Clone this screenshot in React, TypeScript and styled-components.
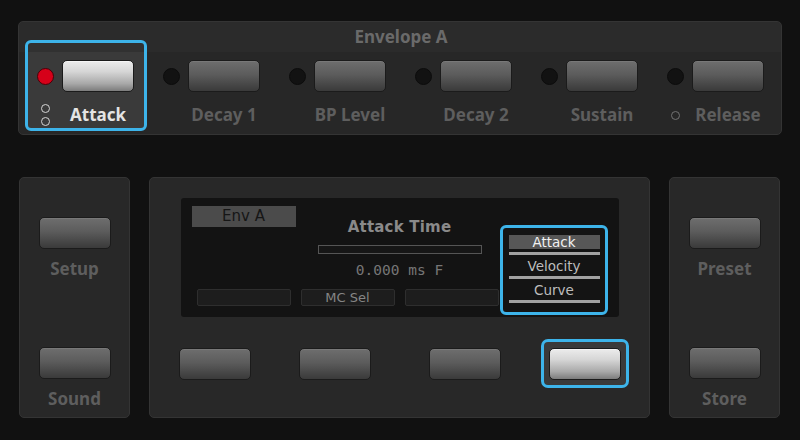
import React from "react";
import styled, { createGlobalStyle } from "styled-components";

const Global = createGlobalStyle`
  html, body { margin: 0; padding: 0; background: #111111; }
  body { font-family: "Noto Sans", "DejaVu Sans", sans-serif; }
  * { box-sizing: border-box; }
`;

const BLUE = "#3db4ea";

const Page = styled.div`
  width: 800px;
  height: 440px;
  padding: 21px 18px 0;
  display: flex;
  flex-direction: column;
  gap: 42px;
  background: #111111;
  overflow: hidden;
`;

/* ---------- Top envelope panel ---------- */
const EnvPanel = styled.section`
  height: 114px;
  border: 1px solid #343434;
  border-radius: 5px;
  background: linear-gradient(#2b2b2b 0 30px, #272727 30px);
  padding: 0 4px 3px 6px;
  display: flex;
  flex-direction: column;
`;

const EnvTitle = styled.div`
  height: 30px;
  line-height: 30px;
  text-align: center;
  font-size: 17px;
  font-weight: 700;
  color: #6a6a6a;
`;

const CellRow = styled.div`
  margin-top: -12px;
  display: flex;
  gap: 4px;
`;

const Cell = styled.div<{ $active?: boolean }>`
  width: 122px;
  height: 91px;
  border: 3px solid ${(p) => (p.$active ? BLUE : "transparent")};
  border-radius: 6px;
  background: ${(p) =>
    p.$active ? "linear-gradient(#313131 0 9px, #3a3a3a 9px)" : "transparent"};
  padding: 17px 10px 2px 9px;
  display: grid;
  grid-template-columns: 17px 72px;
  grid-template-rows: 32px 22px;
  column-gap: 8px;
  row-gap: 12px;
  align-items: center;
`;

const Led = styled.span<{ $on?: boolean }>`
  width: 17px;
  height: 17px;
  border-radius: 50%;
  background: ${(p) => (p.$on ? "#d60019" : "#121212")};
  border: 1px solid ${(p) => (p.$on ? "#4a0008" : "#0c0c0c")};
`;

const Marks = styled.div`
  display: flex;
  flex-direction: column;
  align-items: center;
  gap: 4px;
`;

const Ring = styled.span<{ $bright?: boolean }>`
  width: 9px;
  height: 9px;
  border-radius: 50%;
  border: 1.8px solid ${(p) => (p.$bright ? "#d4d4d4" : "#727272")};
`;

const Label = styled.div<{ $active?: boolean }>`
  line-height: 22px;
  text-align: center;
  font-size: 17px;
  font-weight: 700;
  color: ${(p) => (p.$active ? "#e4e4e4" : "#5e5e5e")};
  white-space: nowrap;
`;

const Key = styled.div<{ $lit?: boolean }>`
  width: 72px;
  height: 32px;
  border-radius: 5px;
  border: 1.5px solid #1b1b1b;
  background: ${(p) =>
    p.$lit
      ? "linear-gradient(#ececec 0%, #d6d6d6 35%, #a9a9a9 75%, #7c7c7c 100%)"
      : "linear-gradient(#6e6e6e 0%, #5c5c5c 45%, #464646 80%, #3a3a3a 100%)"};
  box-shadow: inset 0 1px 0 rgba(255, 255, 255, ${(p) => (p.$lit ? 0.5 : 0.08)});
`;

/* ---------- Bottom panels ---------- */
const LowerRow = styled.div`
  display: flex;
  gap: 19px;
  padding: 0 2px 0 1px;
  height: 241px;
`;

const SidePanel = styled.section`
  width: 111px;
  border: 1px solid #343434;
  border-radius: 5px;
  background: #282828;
  padding-top: 39px;
  display: flex;
  flex-direction: column;
  align-items: center;
  gap: 67px;
`;

const KeyGroup = styled.div`
  display: flex;
  flex-direction: column;
  align-items: center;
  gap: 9px;
`;

const CenterPanel = styled.section`
  flex: 1;
  border: 1px solid #343434;
  border-radius: 5px;
  background: #282828;
  padding-top: 20px;
  display: flex;
  flex-direction: column;
  align-items: center;
  gap: 22px;
`;

const Screen = styled.div`
  position: relative;
  width: 438px;
  height: 119px;
  background: #131313;
  border-radius: 3px;
  padding: 8px 0 0;
  display: flex;
  flex-direction: column;
  font-family: "DejaVu Sans", sans-serif;
`;

const ScreenHead = styled.div`
  display: grid;
  grid-template-columns: 1fr auto 1fr;
  align-items: start;
`;

const Tab = styled.div`
  margin-left: 11px;
  width: 104px;
  height: 21px;
  background: #4b4b4b;
  color: #161616;
  font-size: 15px;
  line-height: 21px;
  text-align: center;
`;

const ParamTitle = styled.div`
  margin-top: 11px;
  line-height: 20px;
  font-size: 15px;
  font-weight: 700;
  color: #8a8a8a;
  letter-spacing: 0.2px;
`;

const Bar = styled.div`
  align-self: center;
  margin-top: 8px;
  width: 164px;
  height: 9px;
  border: 1.5px solid #555555;
  background: #161616;
`;

const Value = styled.div`
  margin-top: 7px;
  line-height: 18px;
  text-align: center;
  font-family: "DejaVu Sans Mono", monospace;
  font-size: 14.5px;
  color: #767676;
`;

const SoftRow = styled.div`
  margin-top: 10px;
  margin-left: 16px;
  display: flex;
  gap: 10px;
`;

const SoftBox = styled.div`
  width: 94px;
  height: 17px;
  border: 1px solid #2e2e2e;
  border-radius: 2px;
  background: #1d1d1d;
  color: #858585;
  font-size: 13px;
  line-height: 15px;
  text-align: center;
`;

const Menu = styled.div`
  position: absolute;
  left: 319px;
  top: 27px;
  width: 108px;
  height: 90px;
  border: 3px solid ${BLUE};
  border-radius: 6px;
  background: #141414;
  padding: 7px 5px 0 6px;
  display: flex;
  flex-direction: column;
  gap: 4px;
`;

const MenuItem = styled.div`
  display: flex;
  flex-direction: column;
  gap: 3px;
`;

const MenuText = styled.div<{ $active?: boolean }>`
  height: 14px;
  line-height: 14px;
  font-size: 13.5px;
  text-align: center;
  color: ${(p) => (p.$active ? "#f2f2f2" : "#bdbdbd")};
  background: ${(p) => (p.$active ? "#575757" : "transparent")};
`;

const MenuRule = styled.div`
  height: 3px;
  background: #a2a2a2;
`;

const SlotRow = styled.div`
  display: flex;
  gap: 42px;
`;

const SlotGroup = styled.div`
  display: flex;
  gap: 32px;
`;

const Slot = styled.div<{ $active?: boolean }>`
  width: 88px;
  height: 49px;
  border: 3px solid ${(p) => (p.$active ? BLUE : "transparent")};
  border-radius: 7px;
  background: ${(p) => (p.$active ? "#3a3a3a" : "transparent")};
  display: flex;
  align-items: center;
  justify-content: center;
`;

type Stage = { name: string; active?: boolean; rings?: number };

const stages: Stage[] = [
  { name: "Attack", active: true, rings: 2 },
  { name: "Decay 1" },
  { name: "BP Level" },
  { name: "Decay 2" },
  { name: "Sustain" },
  { name: "Release", rings: 1 },
];

const menuItems = ["Attack", "Velocity", "Curve"];

export default function App() {
  return (
    <>
      <Global />
      <Page>
        <EnvPanel>
          <EnvTitle>Envelope A</EnvTitle>
          <CellRow>
            {stages.map((s) => (
              <Cell key={s.name} $active={s.active}>
                <Led $on={s.active} />
                <Key $lit={s.active} />
                <Marks>
                  {Array.from({ length: s.rings ?? 0 }).map((_, i) => (
                    <Ring key={i} $bright={s.active} />
                  ))}
                </Marks>
                <Label $active={s.active}>{s.name}</Label>
              </Cell>
            ))}
          </CellRow>
        </EnvPanel>

        <LowerRow>
          <SidePanel>
            <KeyGroup>
              <Key />
              <Label>Setup</Label>
            </KeyGroup>
            <KeyGroup>
              <Key />
              <Label>Sound</Label>
            </KeyGroup>
          </SidePanel>

          <CenterPanel>
            <Screen>
              <ScreenHead>
                <Tab>Env A</Tab>
                <ParamTitle>Attack Time</ParamTitle>
                <div />
              </ScreenHead>
              <Bar />
              <Value>0.000 ms F</Value>
              <SoftRow>
                <SoftBox />
                <SoftBox>MC Sel</SoftBox>
                <SoftBox />
              </SoftRow>
              <Menu>
                {menuItems.map((m, i) => (
                  <MenuItem key={m}>
                    <MenuText $active={i === 0}>{m}</MenuText>
                    <MenuRule />
                  </MenuItem>
                ))}
              </Menu>
            </Screen>
            <SlotRow>
              <SlotGroup>
                <Slot>
                  <Key />
                </Slot>
                <Slot>
                  <Key />
                </Slot>
              </SlotGroup>
              <SlotGroup>
                <Slot>
                  <Key />
                </Slot>
                <Slot $active>
                  <Key $lit />
                </Slot>
              </SlotGroup>
            </SlotRow>
          </CenterPanel>

          <SidePanel>
            <KeyGroup>
              <Key />
              <Label>Preset</Label>
            </KeyGroup>
            <KeyGroup>
              <Key />
              <Label>Store</Label>
            </KeyGroup>
          </SidePanel>
        </LowerRow>
      </Page>
    </>
  );
}
